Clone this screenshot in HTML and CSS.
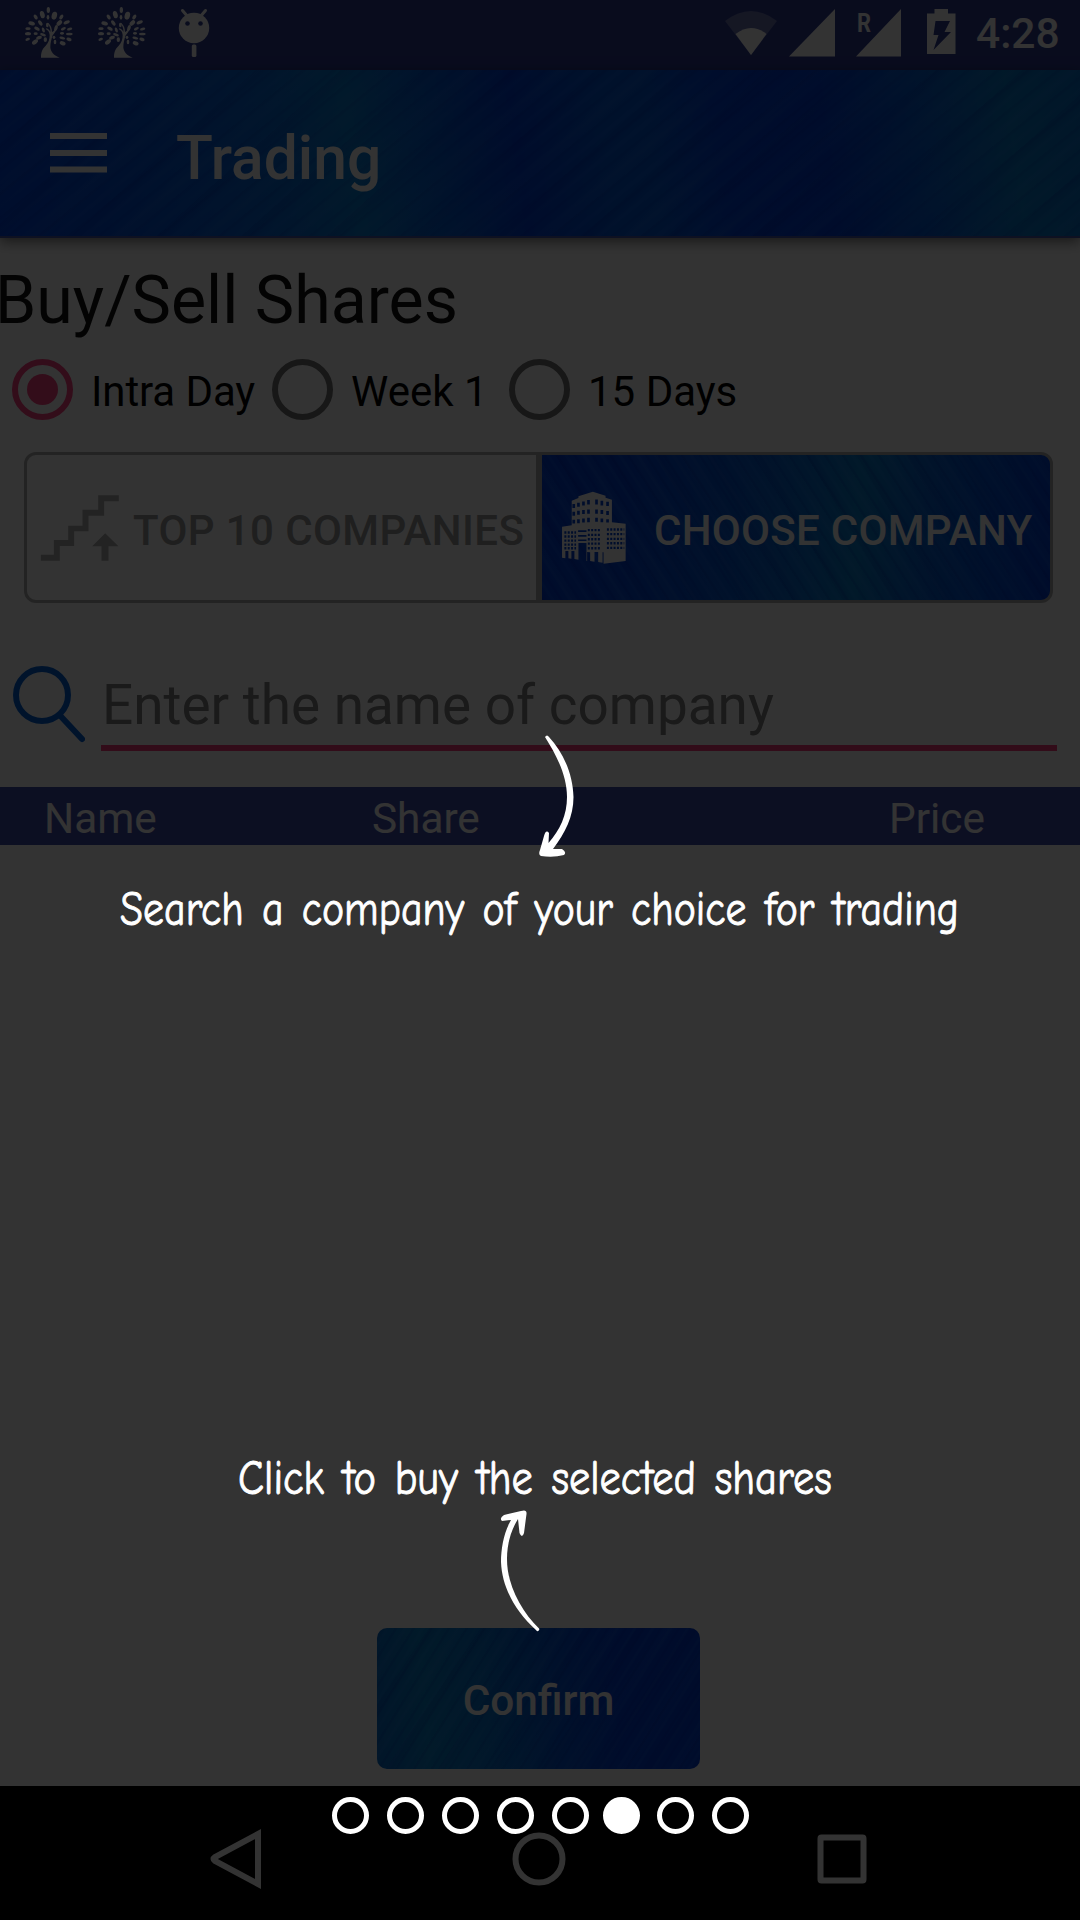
FILE: index.html
```
<!DOCTYPE html>
<html lang="en">
<head>
<meta charset="utf-8">
<title>Trading</title>
<link rel="stylesheet" href="styles.css">
</head>
<body>
<div class="screen">
  <header class="status">
    <div class="status-left">
      <svg class="tree" viewBox="0 0 210 198">
        <g id="tree">
          <path d="M78 173C78 160 80 148 92 137C101 128 104 117 104 105C103 95 98 90 92 87L95 85C101 88 104 91 106 96C108 85 101 75 97 70L100 69C108 76 111 86 111 96C115 95 120 89 122 84L125 86C122 96 116 101 113 106C109 118 106 130 106 142C107 156 117 167 134 173Z"/>
          <g>
            <ellipse cx="100" cy="30" rx="5" ry="9"/><ellipse cx="82" cy="44" rx="7" ry="11" transform="rotate(-15 82 44)"/>
            <ellipse cx="118" cy="47" rx="8" ry="12" transform="rotate(15 118 47)"/><ellipse cx="99" cy="52" rx="4" ry="7"/>
            <ellipse cx="62" cy="51" rx="5" ry="8" transform="rotate(-35 62 51)"/><ellipse cx="139" cy="51" rx="5" ry="8" transform="rotate(35 139 51)"/>
            <ellipse cx="50" cy="70" rx="10" ry="6" transform="rotate(15 50 70)"/><ellipse cx="76" cy="69" rx="5" ry="9" transform="rotate(-35 76 69)"/>
            <ellipse cx="133" cy="69" rx="6" ry="10" transform="rotate(45 133 69)"/><ellipse cx="155" cy="67" rx="10" ry="5" transform="rotate(-25 155 67)"/>
            <ellipse cx="97" cy="75" rx="4" ry="7"/><ellipse cx="123" cy="84" rx="5" ry="9" transform="rotate(20 123 84)"/>
            <ellipse cx="39" cy="86" rx="8" ry="4"/><ellipse cx="66" cy="86" rx="9" ry="5" transform="rotate(30 66 86)"/>
            <ellipse cx="85" cy="90" rx="4" ry="8" transform="rotate(-20 85 90)"/><ellipse cx="145" cy="86" rx="8" ry="4" transform="rotate(-25 145 86)"/>
            <ellipse cx="164" cy="87" rx="8" ry="4" transform="rotate(-15 164 87)"/><ellipse cx="39" cy="101" rx="9" ry="5"/>
            <ellipse cx="62" cy="101" rx="6" ry="4"/><ellipse cx="84" cy="104" rx="9" ry="4" transform="rotate(20 84 104)"/>
            <ellipse cx="141" cy="100" rx="6" ry="4"/><ellipse cx="163" cy="102" rx="10" ry="4"/>
            <ellipse cx="72" cy="113" rx="9" ry="5" transform="rotate(-20 72 113)"/><ellipse cx="91" cy="119" rx="5" ry="7"/>
            <ellipse cx="38" cy="118" rx="7" ry="4" transform="rotate(-20 38 118)"/><ellipse cx="60" cy="126" rx="10" ry="6" transform="rotate(-35 60 126)"/>
            <ellipse cx="142" cy="114" rx="9" ry="4" transform="rotate(15 142 114)"/><ellipse cx="162" cy="118" rx="8" ry="5" transform="rotate(20 162 118)"/>
            <ellipse cx="120" cy="126" rx="4" ry="7"/><ellipse cx="143" cy="130" rx="9" ry="6" transform="rotate(20 143 130)"/>
            <ellipse cx="117" cy="112" rx="4" ry="5"/>
          </g>
        </g>
      </svg>
      <svg class="tree" viewBox="0 0 210 198"><use href="#tree"/></svg>
      <svg class="droid" viewBox="0 0 34 52">
        <circle cx="17" cy="20" r="15.2"/>
        <path d="M5.500 2.500L11 9M28.500 2.500L23 9" stroke="#fff" stroke-width="3" stroke-linecap="round"/>
        <rect x="14.800" y="36.500" width="4.600" height="12.500" rx="1.500"/>
        <circle class="hole" cx="10.500" cy="15.500" r="2.300"/><circle class="hole" cx="23.500" cy="15.500" r="2.300"/>
      </svg>
    </div>
    <div class="status-right">
      <svg class="signals" viewBox="720 0 240 69">
        <path d="M725 21Q751 1 777 21L751 55Z" opacity=".28"/>
        <path d="M735.500 34Q751 22 766.500 34L751 55Z"/>
        <path d="M835 9V56.500H789Z"/>
        <path d="M901 9V56.500H856Z"/>
        <text class="roaming" x="857" y="32" textLength="14" lengthAdjust="spacingAndGlyphs">R</text>
        <path d="M934.500 9H948V13.500H955.500V54H927V13.500H934.500Z"/>
        <path class="hole" d="M935.500 21H950L944.500 32H951L933.500 50L938.500 35H933.500Z"/>
      </svg>
      <span class="clock">4:28</span>
    </div>
  </header>

  <div class="appbar">
    <svg class="menu" viewBox="0 0 57 40"><path d="M0 0h57v6H0zM0 17h57v6H0zM0 33.500h57v6H0z"/></svg>
    <h1 class="title">Trading</h1>
  </div>

  <main class="main">
    <h2 class="heading">Buy/Sell Shares</h2>
    <div class="radios">
      <label class="radio radio-a"><span class="ring on"></span><span>Intra Day</span></label>
      <label class="radio radio-b"><span class="ring"></span><span>Week 1</span></label>
      <label class="radio"><span class="ring"></span><span>15 Days</span></label>
    </div>

    <div class="tabs">
      <div class="tab tab-top">
        <svg class="stairs" viewBox="60 73 236 198">
          <path d="M62 252H101V208H144V165H187V117H234V74H296V92H252V135H205V182H162V226H119V270H62Z"/>
          <path d="M255 188L295 227H265V270H244V227H216Z"/>
        </svg>
        <span class="tab-text">TOP 10 COMPANIES</span>
      </div>
      <div class="tab tab-choose">
        <svg class="building" viewBox="60 55 200 230">
          <path d="M95 90L115 82V77L158 63L196 75V81L215 87V154L256 159V270L190 278V244H187V275L174 273V243H163V272L150 270V244L141 243V270H139V216H115V266L103 264V240H94V263L85 262V240H76V262L66 260V168L95 163Z"/>
          <g class="panes">
            <path d="M101 100V112M115 96V108M130 92V104M145 88V101M169 86V101M185 90V104M202 93V106" stroke-width="8"/>
            <path d="M101 123V135M115 120V132M130 118V130M145 116V129M169 116V129M185 118V130M202 121V133" stroke-width="8"/>
            <path d="M101 147V158M115 145V157M130 143V155M145 141V154M169 141V153M185 143V154M202 145V155" stroke-width="8"/>
            <path d="M73 185H108M73 197H108M73 209H108M73 221H108M73 232H108M143 178H180M143 192H180M143 205H180M143 218H180M143 232H180M200 176H252M200 190H252M200 204H252M200 217H252M200 231H252" stroke-width="7" stroke-dasharray="6 4"/>
            <path d="M114 181H139M114 195H139M114 208H139" stroke-width="5"/>
          </g>
        </svg>
        <span class="tab-text">CHOOSE COMPANY</span>
      </div>
    </div>

    <div class="search">
      <svg class="lens" viewBox="0 0 72 78"><circle cx="29" cy="29" r="26"/><path d="M47.500 50L69 73" stroke-linecap="round"/></svg>
      <div class="field">Enter the name of company</div>
    </div>

    <div class="thead"><span>Name</span><span>Share</span><span>Price</span></div>
    <div class="list"></div>
    <button class="confirm">Confirm</button>
  </main>

  <nav class="navbar">
    <svg viewBox="0 0 60 60"><path d="M52 5V55L9 32Q6 30 9 28Z"/></svg>
    <svg viewBox="0 0 60 60"><circle cx="30" cy="30" r="23.500"/></svg>
    <svg viewBox="0 0 60 60"><rect x="8.500" y="8.500" width="43" height="43" rx="1"/></svg>
  </nav>

  <div class="overlay">
    <svg class="marks" viewBox="0 0 1080 1920">
      <text x="120" y="925" textLength="839" lengthAdjust="spacingAndGlyphs">Search a company of your choice for trading</text>
      <text x="238" y="1494" textLength="594" lengthAdjust="spacingAndGlyphs">Click to buy the selected shares</text>
      <path d="M545 737Q547 734 549 737C563 752 573 774 573.500 797C573.500 817 565 833 553 849L562 849Q567 852 564 855Q553 858 541 856Q538 855 540 850L544 836Q546 829 549 833L548.500 843C560 830 567 815 567 797C567 776 557 756 545 737Z"/>
      <path d="M536 1630Q538 1633 539.500 1629C521 1611 507 1585 507 1559C507 1544 511 1530 518 1519L519.500 1533Q522 1539 524 1533L526.500 1514Q527 1509 521 1511L504 1515Q499 1518 502 1521L511 1520C504 1532 501 1548 501 1562C502 1588 516 1612 536 1630Z"/>
    </svg>
    <div class="dots"><i></i><i></i><i></i><i></i><i></i><i class="current"></i><i></i><i></i></div>
  </div>
</div>
</body>
</html>
```

FILE: styles.css
```
* { box-sizing: border-box; }
body { margin: 0; font-family: Roboto, sans-serif; }

.screen {
  position: relative;
  display: flex;
  flex-direction: column;
  width: 1080px;
  height: 1920px;
  overflow: hidden;
  background: #fff;
}

.status {
  display: flex;
  justify-content: space-between;
  height: 70px;
  background: #2f3c93;
  color: #fff;
}
.status svg { fill: #fff; }
.status .hole { fill: #2f3c93; }
.status-left, .status-right { display: flex; }
.status-left { padding-left: 15px; gap: 3px; }
.tree { width: 70px; height: 66px; }
.droid { width: 34px; height: 52px; margin: 8px 0 0 16px; }
.signals { width: 240px; height: 69px; }
.roaming { font-size: 25px; font-weight: 700; }
.clock {
  width: 104px;
  margin-left: 16px;
  font-size: 42.500px;
  font-weight: 500;
  line-height: 68px;
}

.appbar {
  position: relative;
  display: flex;
  align-items: center;
  height: 168px;
  padding-left: 50px;
  color: #fff;
  border-bottom: 2px solid #4858a8;
  box-shadow: 0 4px 12px rgba(0, 0, 0, .5);
  background:
    repeating-linear-gradient(141deg, rgba(0,20,150,.09) 0 2px, transparent 4px 8px, rgba(60,130,240,.07) 10px 12px, transparent 14px 19px),
    repeating-linear-gradient(138deg, rgba(0,20,150,.1) 0 5px, transparent 12px 25px, rgba(60,140,230,.08) 31px 36px, transparent 42px 57px),
    linear-gradient(82deg, #0044e0 0%, #034edc 10%, #055eda 20%, #066cd8 27%, #087ed4 33%, #0568d8 38%, #0352d6 43%, #003ed8 48%, #0356d8 56%, #0458d8 60%, #0040da 67%, #003ed8 76%, #045ad6 84%, #087ccc 93%, #0670cc 100%);
}
.menu { width: 57px; height: 40px; fill: #fff; }
.title { margin: 11px 0 0 69px; font-size: 60.500px; font-weight: 500; line-height: 70px; }

.main {
  display: flex;
  flex-direction: column;
  height: 1548px;
  padding-top: 12px;
}
.heading { margin: 0 0 -1px -5px; color: #111; font-size: 66.300px; font-weight: 400; line-height: 100px; }

.radios { display: flex; height: 80px; padding-left: 12px; font-size: 42px; }
.radio { display: flex; align-items: center; gap: 18px; line-height: 80px; }
.radio > span:last-child { padding-top: 5px; }
.radio-a { width: 260px; letter-spacing: -.1px; }
.radio-b { width: 237px; }
.ring {
  display: grid;
  place-items: center;
  width: 61px;
  height: 61px;
  border: 6px solid #737373;
  border-radius: 50%;
}
.ring.on { border-color: #ff4081; }
.ring.on::after { content: ""; width: 31px; height: 31px; border-radius: 50%; background: #ff4081; }

.tabs { display: flex; height: 151px; margin: 23px 27px 0 24px; }
.tab { display: flex; align-items: center; font-size: 42px; font-weight: 500; white-space: nowrap; }
.tab-text { padding-top: 5px; }
.tab-top {
  width: 515px;
  padding-left: 13px;
  gap: 14px;
  color: #999;
  letter-spacing: .4px;
  border: 3px solid #b0b0b0;
  border-radius: 12px 0 0 12px;
}
.tab-choose {
  width: 514px;
  padding-left: 18px;
  gap: 27px;
  color: #fff;
  letter-spacing: .3px;
  border: 3px solid #b0b0b0;
  border-radius: 0 12px 12px 0;
  background:
    repeating-linear-gradient(57deg, rgba(0,20,150,.12) 0 2px, transparent 3px 7px, rgba(60,140,240,.1) 8px 10px, transparent 11px 15px),
    repeating-linear-gradient(59deg, rgba(0,20,150,.1) 0 4px, transparent 10px 19px, rgba(60,140,230,.08) 24px 28px, transparent 33px 43px),
    linear-gradient(95deg, #003ed8 0%, #0344d6 18%, #0456d2 38%, #066ed0 53%, #087ecc 62%, #055ed2 76%, #004ed6 88%, #003ed6 100%);
}
.stairs { width: 79px; height: 66px; fill: #b0b0b0; }
.building { width: 67px; height: 77px; fill: #fff; }
.panes { fill: none; stroke: #0344d6; }

.search { display: flex; height: 91px; margin: 57px 23px 0 13px; }
.lens { width: 72px; height: 78px; margin: 6px 16px 0 0; fill: none; stroke: #0462d8; stroke-width: 6; }
.field {
  flex: 1;
  height: 91px;
  padding: 6px 0 0 1px;
  color: #808080;
  font-size: 54.900px;
  line-height: 78px;
  border-bottom: 6px solid #f83c7c;
}

.thead {
  display: grid;
  grid-template-columns: 328px 517px 1fr;
  height: 58px;
  margin-top: 36px;
  padding: 5px 0 0 44px;
  color: #fff;
  background: #3f4bac;
  font-size: 42.300px;
  line-height: 54px;
}
.list { flex: 1; }

.confirm {
  width: 323px;
  height: 141px;
  margin: 0 0 17px 377px;
  padding: 3px 0 0;
  border: 0;
  border-radius: 10px;
  color: #fff;
  font: 500 42.300px Roboto, sans-serif;
  background:
    repeating-linear-gradient(122deg, rgba(0,20,150,.11) 0 2px, transparent 3px 7px, rgba(60,140,240,.09) 8px 10px, transparent 11px 15px),
    repeating-linear-gradient(124deg, rgba(0,20,150,.1) 0 4px, transparent 10px 19px, rgba(60,140,230,.08) 24px 28px, transparent 33px 43px),
    linear-gradient(85deg, #066ccc 0%, #0880cc 16%, #0574d0 34%, #0354d4 54%, #003ed8 74%, #003ed8 100%);
}

.navbar { display: flex; align-items: center; height: 134px; padding: 12px 0 0 206px; gap: 243px; background: #000; }
.navbar svg { width: 60px; height: 60px; fill: none; stroke: #fff; stroke-width: 6; }

.overlay { position: absolute; inset: 0; background: rgba(0, 0, 0, .8); }
.marks { display: block; width: 1080px; height: 1920px; fill: #fff; }
.marks text { font-family: "Comic Neue", Roboto, cursive; font-size: 48px; word-spacing: 5px; stroke: #fff; stroke-width: .9px; }
.dots {
  position: absolute;
  left: 332px;
  top: 1797px;
  display: flex;
  gap: 18px;
}
.dots i { width: 37px; height: 37px; border: 5px solid #fff; border-radius: 50%; }
.dots .current { margin: 0 -1px 0 -4px; background: #fff; }
```
